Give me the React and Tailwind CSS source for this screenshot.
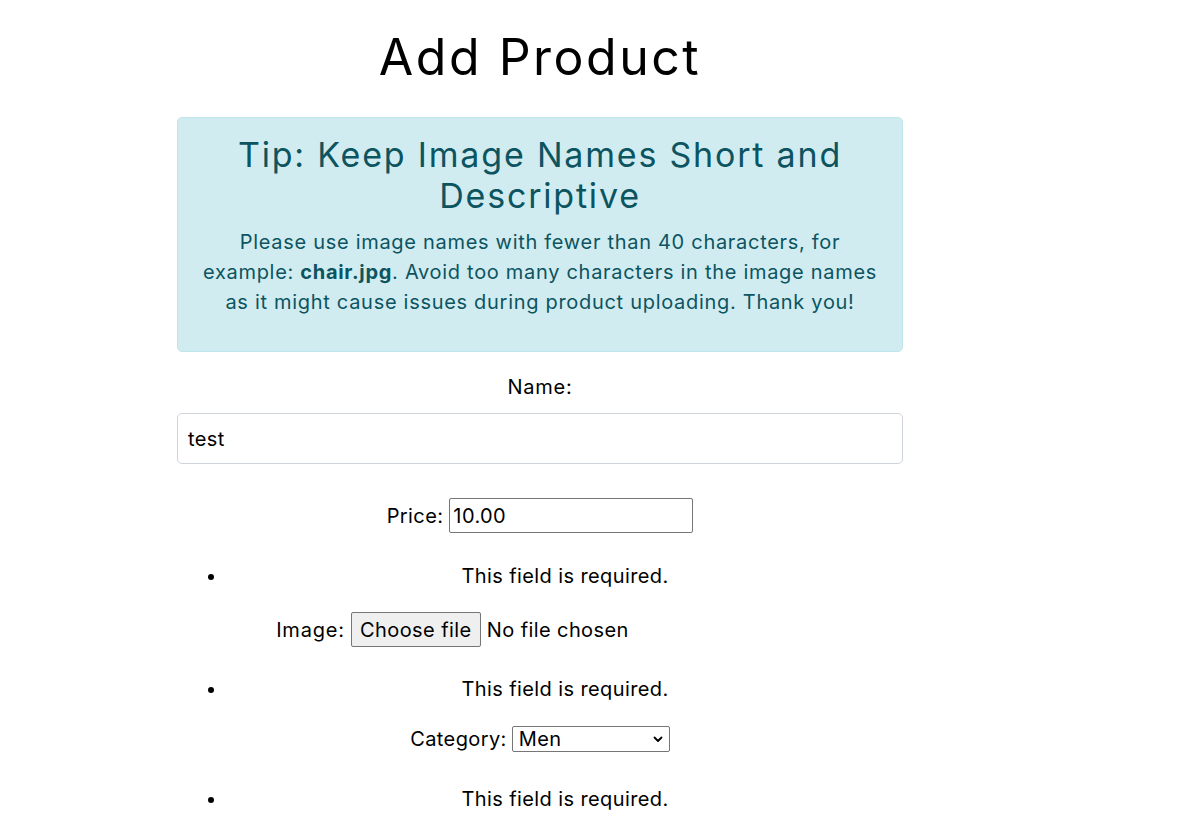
import React from "react";

function ErrorItem() {
  return (
    <ul className="list-disc pl-[50px] m-0">
      <li className="text-center leading-[30px] h-[30px]">This field is required.</li>
    </ul>
  );
}

export default function App() {
  return (
    <div className="min-h-[837px] w-[1204px] bg-white text-black text-[20px] tracking-[0.4px] font-[Inter,'Open_Sans',sans-serif]">
      <div className="w-[726px] ml-[177px] flex flex-col">
        <h1 className="mt-[27px] mb-[30px] h-[60px] leading-[60px] text-center text-[50px] tracking-[2.5px] font-normal">
          Add Product
        </h1>

        <div className="h-[235px] rounded-[5px] border border-[#bee5eb] bg-[#d1ecf1] text-[#0c5460] px-4 pt-4 text-center">
          <h3 className="text-[34px] leading-[41px] tracking-[1.8px] font-normal">
            Tip: Keep Image Names Short and
            <br />
            Descriptive
          </h3>
          <p className="mt-[11px] text-[20px] leading-[30px] tracking-[0.7px]">
            Please use image names with fewer than 40 characters, for
            <br />
            example: <b className="font-bold">chair.jpg</b>. Avoid too many characters in the image names
            <br />
            as it might cause issues during product uploading. Thank you!
          </p>
        </div>

        <div className="mt-[22px] h-[27px] leading-[27px] text-center tracking-[0.8px]">Name:</div>
        <div className="mt-[12px] h-[51px] rounded-[5px] border border-[#ced4da] flex items-center px-[10px]">
          test
        </div>

        <div className="mt-[34px] h-[35px] flex justify-center items-center gap-[6px]">
          <span>Price:</span>
          <div className="w-[244px] h-[35px] border border-[#767676] rounded-[2px] flex items-center px-[3px]">
            10.00
          </div>
        </div>

        <div className="mt-[28px]">
          <ErrorItem />
        </div>

        <div className="mt-[21px] h-[35px] flex justify-center items-center gap-[6px]">
          <span className="tracking-[0.8px]">Image:</span>
          <div className="w-[453px] flex items-center gap-[6px]">
            <div className="h-[35px] w-[130px] border border-[#767676] rounded-[2px] bg-[#efefef] flex items-center justify-center">
              Choose file
            </div>
            <span>No file chosen</span>
          </div>
        </div>

        <div className="mt-[27px]">
          <ErrorItem />
        </div>

        <div className="mt-[22px] h-[26px] flex justify-center items-center gap-[5px]">
          <span>Category:</span>
          <div className="w-[158px] h-[26px] border border-[#767676] rounded-[2px] flex items-center justify-between pl-[6px] pr-[5px]">
            <span>Men</span>
            <svg width="12" height="12" viewBox="0 0 12 12" fill="none">
              <path d="M2.5 4.5 L6 8 L9.5 4.5" stroke="#000" strokeWidth="1.8" strokeLinecap="round" strokeLinejoin="round" />
            </svg>
          </div>
        </div>

        <div className="mt-[32px]">
          <ErrorItem />
        </div>
      </div>
    </div>
  );
}
